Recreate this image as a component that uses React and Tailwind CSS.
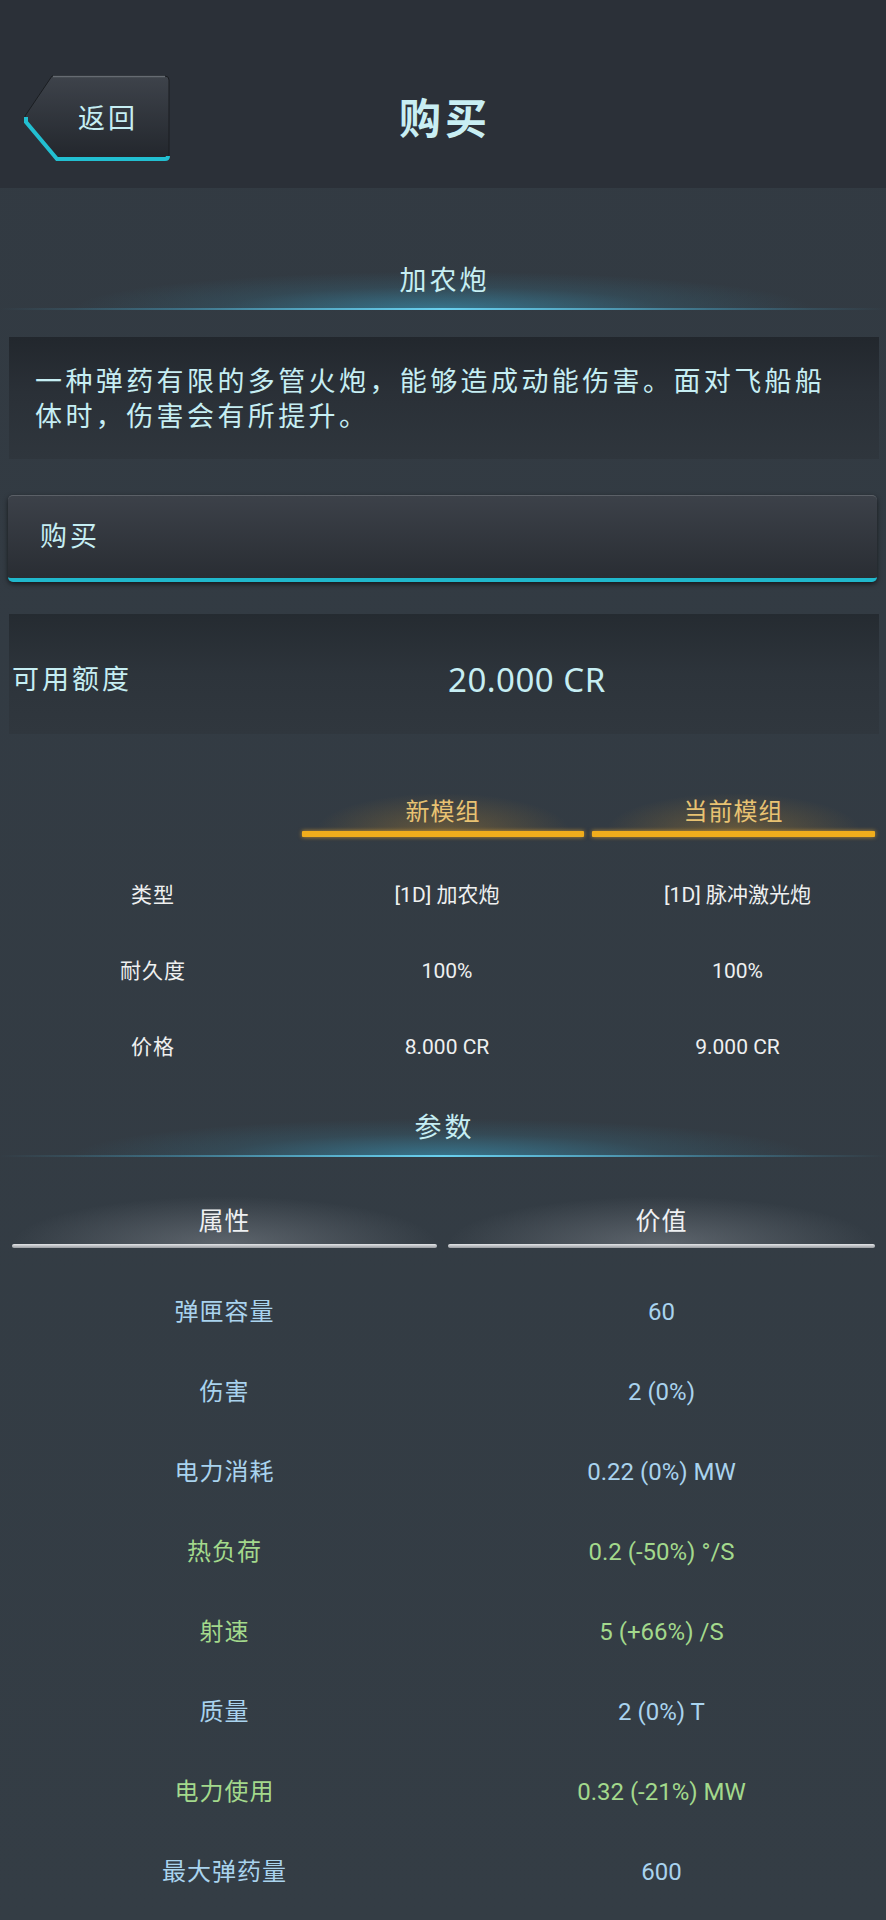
import React from 'react';

const moduleRows = [
    { label: '类型', next: '[1D] 加农炮', current: '[1D] 脉冲激光炮' },
    { label: '耐久度', next: '100%', current: '100%' },
    { label: '价格', next: '8.000 CR', current: '9.000 CR' },
];

const params = [
    { label: '弹匣容量', value: '60' },
    { label: '伤害', value: '2 (0%)' },
    { label: '电力消耗', value: '0.22 (0%) MW' },
    { label: '热负荷', value: '0.2 (-50%) °/S', good: true },
    { label: '射速', value: '5 (+66%) /S', good: true },
    { label: '质量', value: '2 (0%) T' },
    { label: '电力使用', value: '0.32 (-21%) MW', good: true },
    { label: '最大弹药量', value: '600' },
];

const BackButton = () => (
    <div className="relative ml-[24px] h-[88px] w-[146px]">
        <svg className="absolute inset-0" width="146" height="88" viewBox="0 0 146 88">
            <defs>
                <linearGradient id="backFill" x1="0" y1="0" x2="0" y2="1">
                    <stop offset="0" stopColor="#3e434b" />
                    <stop offset="1" stopColor="#22262c" />
                </linearGradient>
            </defs>
            <path d="M28 1 H141 Q145 1 145 5 V81 Q145 85 141 85 H33 L1 47 V41 Z" fill="url(#backFill)" stroke="#1a1d21" strokeWidth="1" />
            <path d="M29 1.5 H141" stroke="#666b72" strokeWidth="1.5" />
            <path d="M2 42 V47 L33 84 H141 Q144 84 144 81" fill="none" stroke="#22bfd1" strokeWidth="4" />
        </svg>
        <span className="relative flex h-full items-center justify-center pl-[22px] text-[27px] tracking-[3px] text-[#c6eef3]">
            返回
        </span>
    </div>
);

// cyan section title with glow line under it
const GlowTitle = ({ children, className }) => (
    <div className={`relative flex h-[70px] items-end justify-center bg-[radial-gradient(ellipse_42%_55%_at_50%_100%,rgba(60,175,215,0.5)_0%,rgba(60,175,215,0.12)_60%,rgba(60,175,215,0)_100%)] ${className}`}>
        <span className="pb-[12px] pl-[3px] text-[27px] leading-[34px] tracking-[3px] text-[#c6eef3]">{children}</span>
        <div className="absolute bottom-0 left-0 right-0 h-[2px] bg-[linear-gradient(90deg,rgba(80,190,230,0)_0%,rgba(80,190,230,0.35)_20%,#6ad0ee_50%,rgba(80,190,230,0.35)_80%,rgba(80,190,230,0)_100%)]" />
    </div>
);

const ModuleHead = ({ children, width }) => (
    <div className={`flex h-[60px] flex-col justify-end ${width}`}>
        <div className="flex flex-1 items-end justify-center bg-[radial-gradient(ellipse_45%_70%_at_50%_100%,rgba(230,160,40,0.28)_0%,rgba(230,160,40,0)_100%)] pb-[4px]">
            <span className="text-[24px] leading-[30px] tracking-[1px] text-[#e8c272]">{children}</span>
        </div>
        <div className="h-[6px] rounded-[1px] bg-[#f0ad1c] shadow-[0_0_4px_rgba(255,180,40,0.7)]" />
    </div>
);

const ParamHead = ({ children, width }) => (
    <div className={`flex h-[60px] flex-col justify-end ${width}`}>
        <div className="flex flex-1 items-end justify-center bg-[radial-gradient(ellipse_50%_85%_at_50%_100%,rgba(200,205,212,0.28)_0%,rgba(200,205,212,0)_100%)] pb-[7px]">
            <span className="text-[25px] leading-[30px] tracking-[1px] text-[#eef0f2]">{children}</span>
        </div>
        <div className="h-[4px] rounded-full bg-[linear-gradient(180deg,#e4e6e8,#989ca1)]" />
    </div>
);

export default function App() {
    return (
        <div className="min-h-[1920px] w-[886px] bg-[linear-gradient(180deg,#323a42_0%,#343d45_100%)] font-['Roboto','Noto_Sans_CJK_SC',sans-serif]">
            {/* Header */}
            <div className="grid h-[188px] grid-cols-[1fr_auto_1fr] items-center bg-[#2b3038] pt-[50px]">
                <BackButton />
                <h1 className="pl-[4px] text-[42px] font-bold tracking-[4px] text-[#c8eef3]">购买</h1>
                <div />
            </div>

            <GlowTitle className="mt-[52px]">加农炮</GlowTitle>

            {/* Description */}
            <div className="ml-[9px] mr-[7px] mt-[27px] h-[122px] bg-[linear-gradient(180deg,#22272d_0%,#2a3037_45%,#2f363d_100%)] pl-[26px] pr-[40px] pt-[28px]">
                <p className="text-[27px] leading-[35px] tracking-[3.4px] text-[#c6eef3]">
                    一种弹药有限的多管火炮，能够造成动能伤害。面对飞船船体时，伤害会有所提升。
                </p>
            </div>

            {/* Buy button */}
            <div className="ml-[8px] mr-[9px] mt-[36px] flex h-[87px] items-center rounded-[5px] border-t border-b-[4px] border-t-[#5b6067] border-b-[#20b8cc] bg-[linear-gradient(180deg,#3c4149_0%,#292d33_100%)] pl-[32px] shadow-[0_2px_5px_rgba(0,0,0,0.6)]">
                <span className="text-[27px] tracking-[3px] text-[#c6eef3]">购买</span>
            </div>

            {/* Credit */}
            <div className="ml-[9px] mr-[7px] mt-[32px] flex h-[120px] items-center bg-[linear-gradient(180deg,#252b31_0%,#2d343b_50%,#30373e_100%)] pt-[12px]">
                <span className="w-[439px] pl-[3px] text-[27px] tracking-[3px] text-[#c6eef3]">可用额度</span>
                <span className="font-['Noto_Sans',sans-serif] text-[33px] tracking-[0.5px] text-[#c6eef3]">20.000 CR</span>
            </div>

            {/* Module compare */}
            <div className="mt-[43px] flex">
                <div className="w-[302px]" />
                <ModuleHead width="w-[282px]">新模组</ModuleHead>
                <div className="w-[8px]" />
                <ModuleHead width="w-[283px]">当前模组</ModuleHead>
            </div>
            <div className="mt-[21px]">
                {moduleRows.map((row) => (
                    <div key={row.label} className="flex h-[76px] items-center text-[21px] text-[#eef0f0]">
                        <span className="w-[306px] text-center tracking-[1px]">{row.label}</span>
                        <span className="w-[282px] text-center">{row.next}</span>
                        <div className="w-[8px]" />
                        <span className="w-[283px] text-center">{row.current}</span>
                    </div>
                ))}
            </div>

            <GlowTitle className="mt-[1px]">参数</GlowTitle>

            {/* Parameters */}
            <div className="mt-[31px] flex">
                <div className="w-[12px]" />
                <ParamHead width="w-[425px]">属性</ParamHead>
                <div className="w-[11px]" />
                <ParamHead width="w-[427px]">价值</ParamHead>
            </div>
            <div className="mt-[24px]">
                {params.map((p) => (
                    <div
                        key={p.label}
                        className={`flex h-[80px] items-center text-[24px] ${p.good ? 'text-[#a3d98c]' : 'text-[#a9d3ee]'}`}
                    >
                        <span className="ml-[12px] w-[425px] text-center tracking-[1px]">{p.label}</span>
                        <div className="w-[11px]" />
                        <span className="w-[427px] text-center">{p.value}</span>
                    </div>
                ))}
            </div>
        </div>
    );
}
